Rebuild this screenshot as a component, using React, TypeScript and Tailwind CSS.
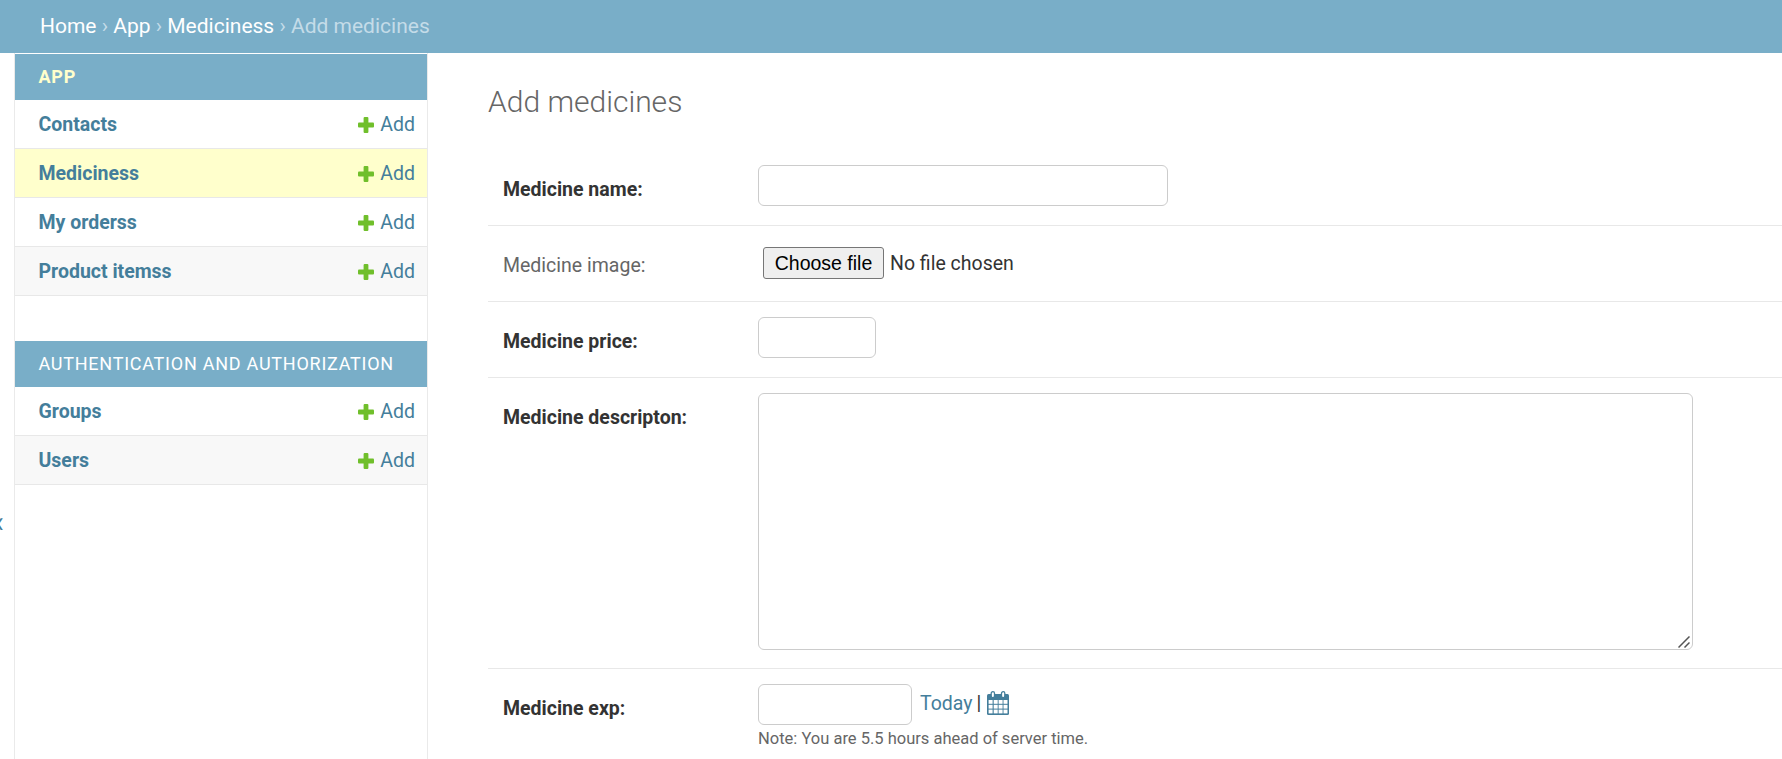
import type { ReactNode } from 'react';

type Model = { name: string; rowClass: string };

const appModels: Model[] = [
  { name: 'Contacts', rowClass: 'bg-white' },
  { name: 'Mediciness', rowClass: 'bg-[#ffffcc]' },
  { name: 'My orderss', rowClass: 'bg-white' },
  { name: 'Product itemss', rowClass: 'bg-[#f8f8f8]' },
];

const authModels: Model[] = [
  { name: 'Groups', rowClass: 'bg-white' },
  { name: 'Users', rowClass: 'bg-[#f8f8f8]' },
];

const inputClass = 'block h-[41px] rounded-md border border-[#cccccc] bg-white px-2 outline-none';

function PlusIcon() {
  return (
    <svg className="h-4 w-4" viewBox="0 0 16 16" fill="#70bf2b">
      <rect x="0" y="5.6" width="16" height="4.8" rx="1" />
      <rect x="5.6" y="0" width="4.8" height="16" rx="1" />
    </svg>
  );
}

function CalendarIcon() {
  return (
    <svg className="h-6 w-[22px]" viewBox="0 0 22 24">
      <rect x="0" y="3" width="22" height="21" rx="1.5" fill="#447e9b" />
      <g fill="#fff">
        {[9, 13.8, 18.6].map((y) =>
          [1.6, 6.7, 11.6, 16.5].map((x) => (
            <rect key={`${x}-${y}`} x={x} y={y} width="4" height="3.8" />
          )),
        )}
      </g>
      <g fill="#fff" stroke="#447e9b" strokeWidth="1.3">
        <rect x="4.2" y="0.7" width="3.3" height="6" rx="1.6" />
        <rect x="14.5" y="0.7" width="3.3" height="6" rx="1.6" />
      </g>
    </svg>
  );
}

function ModelRow({ name, rowClass }: Model) {
  return (
    <div className={`flex h-[49px] items-center justify-between border-b border-[#e8e8e8] pt-px pr-3 pl-[23.5px] text-[19.5px] text-[#447e9b] ${rowClass}`}>
      <a className="pt-px font-bold">{name}</a>
      <a className="flex items-center gap-1.5">
        <PlusIcon />
        <span className="pt-px">Add</span>
      </a>
    </div>
  );
}

function Crumb({ children }: { children: ReactNode }) {
  return (
    <>
      <a className="text-white">{children}</a>
      {' › '}
    </>
  );
}

function FormRow({ label, required = true, className, children }: { label: string; required?: boolean; className: string; children: ReactNode }) {
  return (
    <div className={`flex border-b border-[#e8e8e8] pt-[15px] pl-[15px] ${className}`}>
      <label className={`w-[255px] shrink-0 pt-[13px] text-[19.5px] leading-6 ${required ? 'font-bold text-[#333333]' : 'text-[#666666]'}`}>
        {label}
      </label>
      {children}
    </div>
  );
}

export default function App() {
  return (
    <div className="flex h-[759px] flex-col overflow-hidden bg-white font-['Roboto','Liberation_Sans',sans-serif] text-[#333333]">
      <nav className="h-[53px] shrink-0 bg-[#79aec8] pt-[13px] pl-10 text-[21px] leading-[26px] text-[#c4dce8]">
        <Crumb>Home</Crumb>
        <Crumb>App</Crumb>
        <Crumb>Mediciness</Crumb>
        Add medicines
      </nav>
      <div className="flex min-h-0 flex-1">
        <div className="flex w-[14px] shrink-0 justify-end overflow-hidden pt-[454px] pr-[10px]">
          <span className="text-[30px] leading-[30px] text-[#447e9b]">«</span>
        </div>
        <aside className="w-[414px] shrink-0 border-x border-[#eaeaea] pt-px">
          <h2 className="flex h-[46px] items-center bg-[#79aec8] pb-0.5 pl-[23.5px] text-[18px] font-bold tracking-[0.75px] text-[#ffffcc]">APP</h2>
          {appModels.map((m) => (
            <ModelRow key={m.name} {...m} />
          ))}
          <h2 className="mt-[45px] flex h-[46px] items-center bg-[#79aec8] pb-0.5 pl-[23.5px] text-[18px] tracking-[0.75px] text-white">
            AUTHENTICATION AND AUTHORIZATION
          </h2>
          {authModels.map((m) => (
            <ModelRow key={m.name} {...m} />
          ))}
        </aside>
        <main className="min-w-0 flex-1 pt-[31px] pl-[60px]">
          <h1 className="mb-[30px] text-[30px] leading-9 font-light text-[#666666]">Add medicines</h1>
          <form>
            <FormRow label="Medicine name:" className="h-[76px]">
              <input className={`${inputClass} w-[410px]`} />
            </FormRow>
            <FormRow label="Medicine image:" required={false} className="h-[76px]">
              <div className="mt-[6px] flex h-8 items-center gap-1.5 pl-[5px] text-[19.5px]">
                <button type="button" className="h-8 w-[121px] rounded-[3px] border border-[#767676] bg-[#efefef] font-['Liberation_Sans',Arial,sans-serif] text-[19.5px] leading-7 text-black">
                  Choose file
                </button>
                <span className="pt-0.5">No file chosen</span>
              </div>
            </FormRow>
            <FormRow label="Medicine price:" className="h-[76px]">
              <input className={`${inputClass} w-[118px]`} />
            </FormRow>
            <FormRow label="Medicine descripton:" className="h-[291px]">
              <div className="relative h-[257px] w-[935px]">
                <textarea className="block h-full w-full resize-none rounded-md border border-[#cccccc] bg-white p-2 outline-none" />
                <svg className="absolute right-[3px] bottom-[2px] h-3 w-3" viewBox="0 0 12 12" stroke="#555" strokeWidth="1.5">
                  <path d="M0.5 11.5 11.5 0.5M6.5 11.5 11.5 6.5" />
                </svg>
              </div>
            </FormRow>
            <FormRow label="Medicine exp:" className="h-[120px]">
              <div>
                <div className="flex">
                  <input className={`${inputClass} w-[154px]`} />
                  <div className="ml-2 flex h-[38px] items-center text-[19.5px]">
                    <a className="pt-0.5 text-[#447e9b]">Today</a>
                    <span className="mr-1.5 ml-1 pt-0.5">|</span>
                    <CalendarIcon />
                  </div>
                </div>
                <p className="mt-1 text-[16.5px] leading-5 text-[#666666]">Note: You are 5.5 hours ahead of server time.</p>
              </div>
            </FormRow>
          </form>
        </main>
      </div>
    </div>
  );
}
